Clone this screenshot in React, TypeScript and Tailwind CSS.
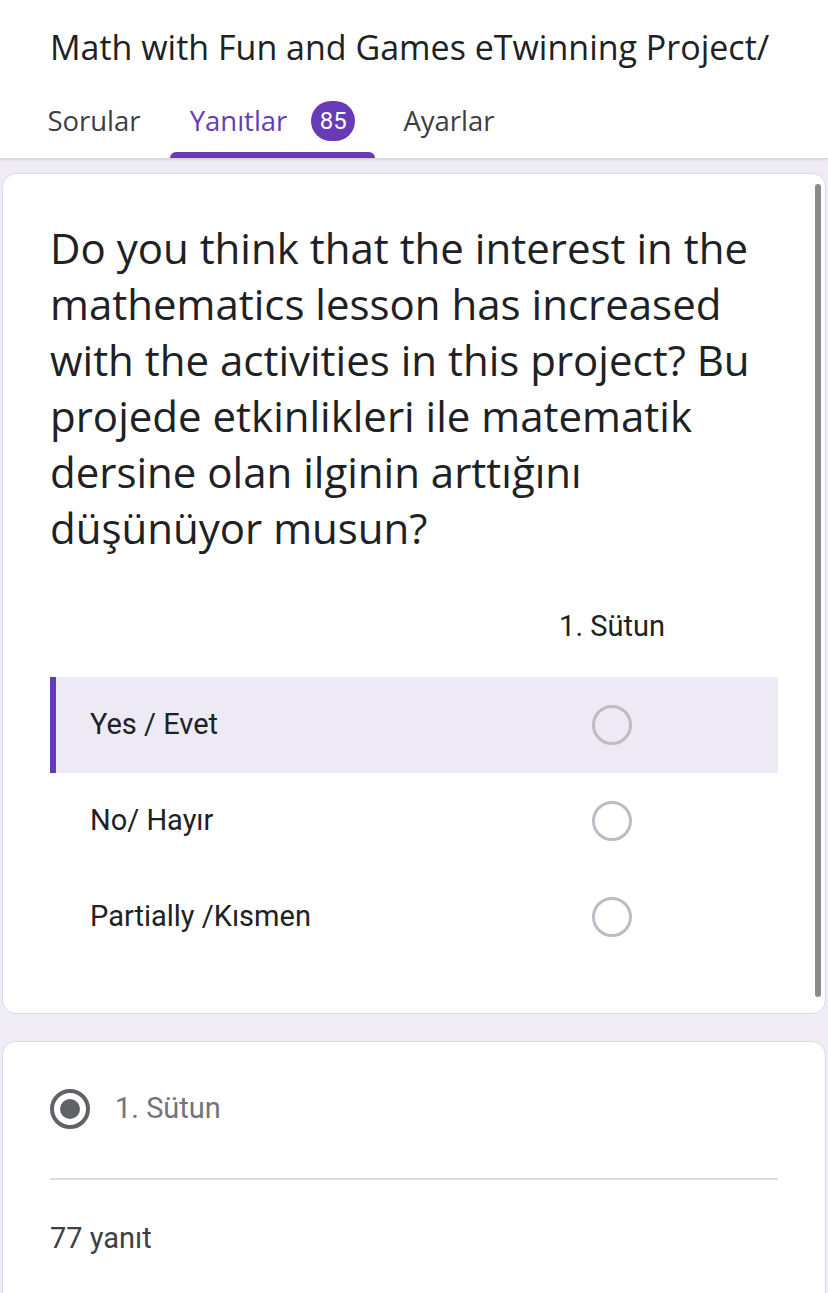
import React from "react";

const gs = { fontFamily: '"Open Sans", "Noto Sans", sans-serif' };
const rb = { fontFamily: 'Roboto, "Noto Sans", sans-serif' };

function EmptyRadio() {
  return <div className="w-[40px] h-[40px] rounded-full border-[3px] border-[#bdbbc3]" />;
}

export default function App() {
  const rows = ["Yes / Evet", "No/ Hayır", "Partially /Kısmen"];
  return (
    <div className="w-[828px] h-[1293px] overflow-hidden bg-[#efecf6] flex flex-col">
      <div className="bg-white relative z-10 shadow-[0_1px_3px_rgba(0,0,0,0.18)] flex flex-col">
        <div className="pl-[50px] pr-[40px] pt-[26px] h-[92px] overflow-hidden">
          <div className="whitespace-nowrap text-[34px] leading-[42px] text-[#202124]" style={gs}>
            Math with Fun and Games eTwinning Project/
          </div>
        </div>
        <div className="flex items-stretch h-[66px] pl-[28px]" style={gs}>
          <div className="w-[132px] flex items-center justify-center text-[27.5px] text-[#3c4043] pb-[8px]">Sorular</div>
          <div className="ml-[10px] w-[205px] relative flex items-center justify-center gap-[24px] pb-[8px]">
            <span className="text-[27.5px] text-[#673ab7]">Yanıtlar</span>
            <span className="w-[44px] h-[40px] rounded-full bg-[#673ab7] text-white text-[24px] flex items-center justify-center" style={rb}>85</span>
            <div className="absolute left-0 right-0 bottom-0 h-[6px] bg-[#673ab7] rounded-t-[6px]" />
          </div>
          <div className="ml-[8px] w-[132px] flex items-center justify-center text-[27.5px] text-[#3c4043] pb-[8px]">Ayarlar</div>
        </div>
      </div>

      <div className="pt-[15px] px-[2px] flex flex-col gap-[27px]">
        <div className="relative bg-white rounded-[14px] border border-[#dcdae2] pl-[47px] pr-[47px] pt-[46px] pb-[48px]">
          <div className="text-[42px] leading-[56px] text-[#202124] whitespace-nowrap" style={gs}>
            Do you think that the interest in the<br />
            mathematics lesson has increased<br />
            with the activities in this project? Bu<br />
            projede etkinlikleri ile matematik<br />
            dersine olan ilginin arttığını<br />
            düşünüyor musun?
          </div>
          <div className="mt-[53px] mb-[32px] h-[36px] flex items-center" style={rb}>
            <div className="flex-1" />
            <div className="w-[200px] mr-[66px] text-center text-[29px] text-[#202124]">1. Sütun</div>
          </div>
          <div className="flex flex-col" style={rb}>
            {rows.map((r, i) => (
              <div
                key={r}
                className={
                  i === 0
                    ? "h-[96px] flex items-center bg-[#edeaf6] border-l-[6px] border-[#673ab7] pl-[34px]"
                    : "h-[96px] flex items-center pl-[40px]"
                }
              >
                <div className="flex-1 text-[29px] text-[#202124]">{r}</div>
                <div className="w-[200px] mr-[66px] flex justify-center">
                  <EmptyRadio />
                </div>
              </div>
            ))}
          </div>
          <div className="absolute right-[4px] top-[10px] bottom-[16px] w-[6px] rounded-full bg-[#8b8b8b]" />
        </div>

        <div className="bg-white rounded-[14px] border border-[#dcdae2] px-[47px] pt-[47px] pb-[200px]" style={rb}>
          <div className="h-[40px] flex items-center gap-[25px]">
            <div className="w-[40px] h-[40px] rounded-full border-[4px] border-[#5f6368] flex items-center justify-center">
              <div className="w-[20px] h-[20px] rounded-full bg-[#5f6368]" />
            </div>
            <span className="text-[29px] text-[#70757a]">1. Sütun</span>
          </div>
          <div className="mt-[49px] h-[2px] bg-[#dadce0]" />
          <div className="mt-[41px] h-[36px] flex items-center text-[29px] text-[#3c4043]">77 yanıt</div>
        </div>
      </div>
    </div>
  );
}
